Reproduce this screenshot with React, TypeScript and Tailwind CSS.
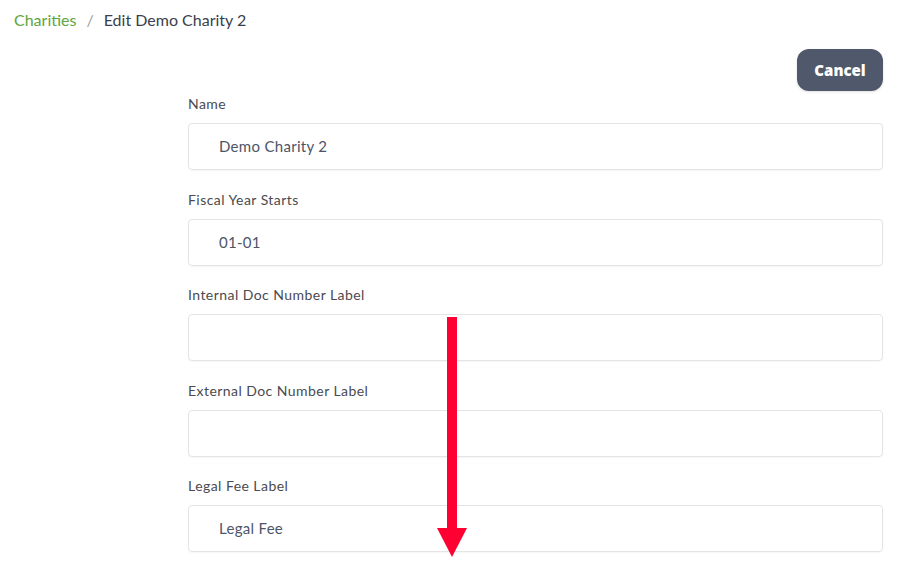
const fields = [
  { label: "Name", value: "Demo Charity 2" },
  { label: "Fiscal Year Starts", value: "01-01" },
  { label: "Internal Doc Number Label", value: "" },
  { label: "External Doc Number Label", value: "" },
  { label: "Legal Fee Label", value: "Legal Fee" },
];

export default function App() {
  return (
    <div className="relative w-[904px] h-[566px] overflow-hidden bg-white font-['Lato','Open_Sans',sans-serif]">
      {/* breadcrumb */}
      <div className="flex items-center h-[40px] px-[14px] text-[16px]">
        <span className="text-[#5ea540]">Charities</span>
        <span className="mx-[10px] text-[#a0a0a0]">/</span>
        <span className="text-[#3a3f4b]">Edit Demo Charity 2</span>
      </div>

      <div className="pl-[188px] pr-[21px]">
        <div className="flex justify-end mt-[9px]">
          <button className="h-[42px] w-[86px] rounded-[12px] bg-[#50586b] text-white text-[15px] font-extrabold font-['Open_Sans',sans-serif] shadow-sm">
            Cancel
          </button>
        </div>

        <div className="flex flex-col gap-[19.5px] mt-[3px]">
          {fields.map((f) => (
            <div key={f.label} className="flex flex-col gap-[9px]">
              <label className="text-[14px] leading-[20px] tracking-[0.45px] text-[#4a4a4f]">{f.label}</label>
              <div className="h-[47px] flex items-center rounded-[4px] border border-[#e4e4e4] shadow-[0_1px_2px_rgba(0,0,0,0.04)] pl-[30px] text-[15px] tracking-[0.3px] text-[#4d5568]">
                {f.value}
              </div>
            </div>
          ))}
        </div>
      </div>

      {/* annotation arrow */}
      <svg className="absolute left-0 top-0 pointer-events-none" width="904" height="566">
        <rect x="447" y="317" width="10" height="212" fill="#ff0033" />
        <polygon points="437,528 467,528 452,557" fill="#ff0033" />
      </svg>
    </div>
  );
}
